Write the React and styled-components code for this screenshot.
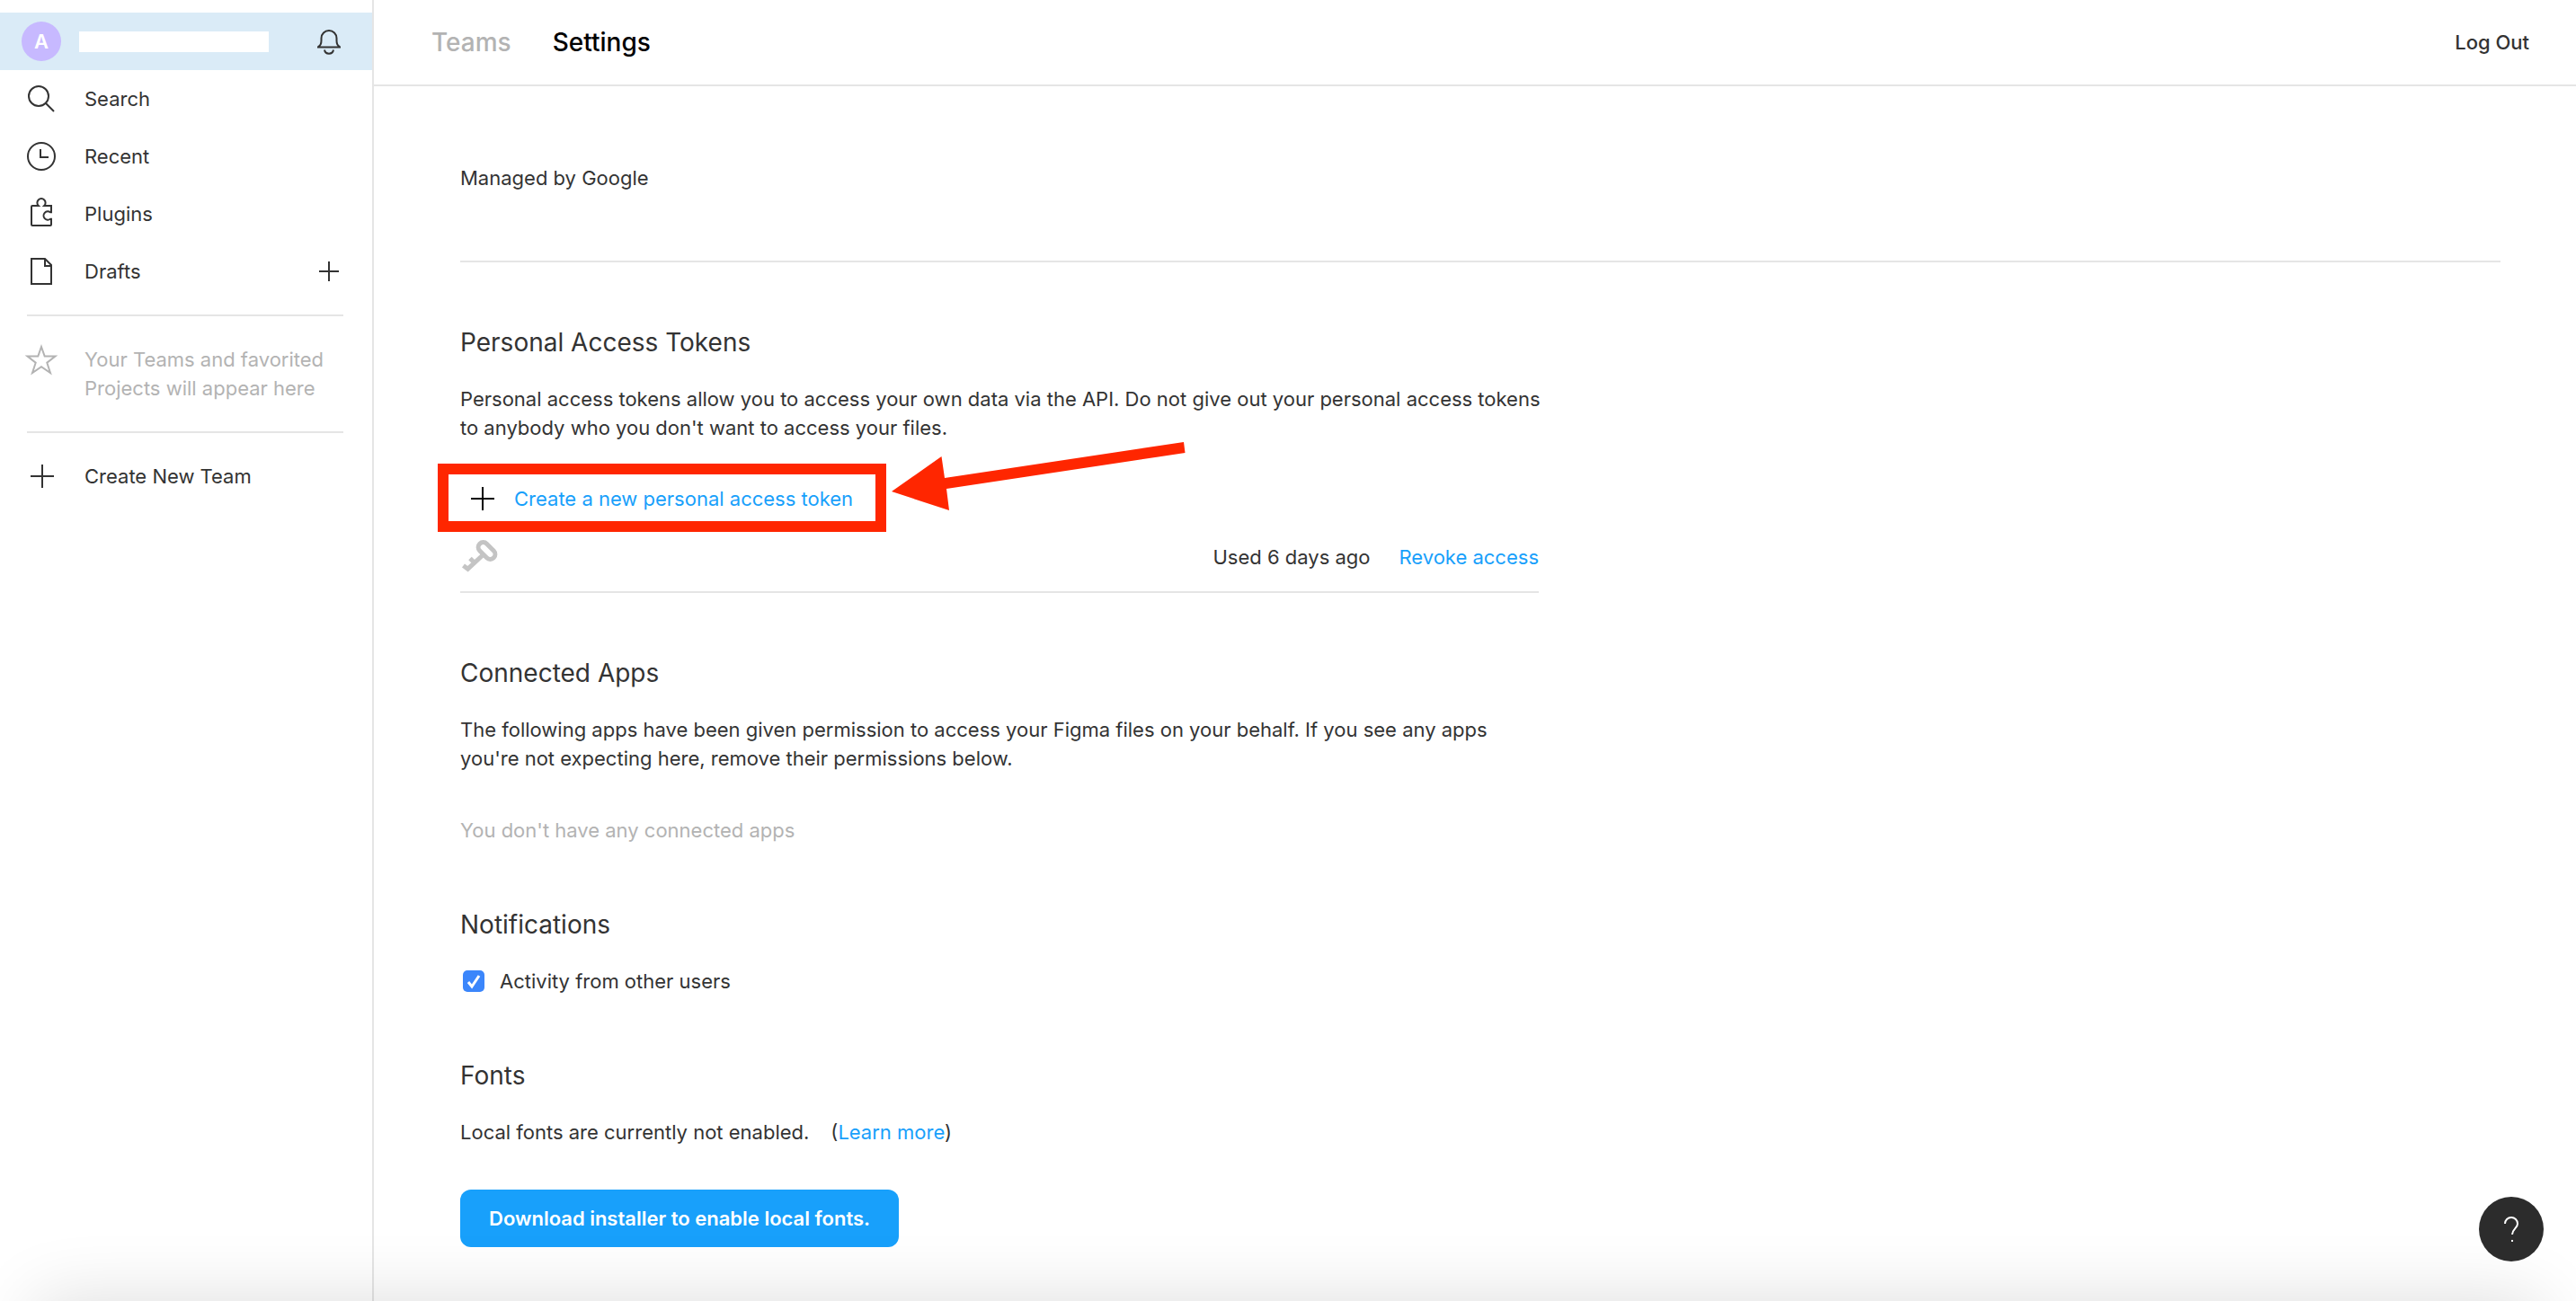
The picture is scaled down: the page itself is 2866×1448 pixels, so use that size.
import React from "react";
import styled, { createGlobalStyle } from "styled-components";

const Global = createGlobalStyle`
  *, *::before, *::after { box-sizing: border-box; }
  body {
    margin: 0;
    background: #fff;
    color: #333;
    font: 400 22px/32px Inter, "Liberation Sans", sans-serif;
  }
  h1, h2, p { margin: 0; font-weight: 400; }
  button { font: inherit; color: inherit; background: none; border: 0; padding: 0; cursor: pointer; }
  a { color: inherit; text-decoration: none; }
  svg { display: block; flex: none; overflow: visible; }
`;

const Shell = styled.div`
  display: flex;
  min-height: 100vh;
`;

const Sidebar = styled.nav`
  flex: none;
  width: 416px;
  padding-top: 14px;
  border-right: 2px solid #e5e5e5;
`;

const SideRow = styled.div`
  display: flex;
  align-items: center;
  height: 64px;
  padding: 0 32px 0 24px;
  background: ${(p) => (p.$selected ? "#daebf7" : "none")};
`;

const SideLink = styled.a`
  display: flex;
  align-items: center;
  flex: 1;
  gap: ${(p) => (p.$profile ? 20 : 26)}px;
`;

const Avatar = styled.span`
  width: 44px;
  height: 44px;
  border-radius: 50%;
  background: #c7b9ff;
  color: #fff;
  font-weight: 600;
  line-height: 44px;
  text-align: center;
`;

const NameField = styled.span`
  width: 211px;
  height: 23px;
  background: #fff;
`;

const SideDivider = styled.hr`
  height: 2px;
  margin: 16px 32px 16px 30px;
  border: 0;
  background: #e5e5e5;
`;

const EmptyHint = styled.div`
  display: flex;
  gap: 26px;
  padding: 16px 24px;
  color: #b3b3b3;
`;

const Page = styled.div`
  flex: 1;
  min-width: 0;
`;

const Header = styled.header`
  display: flex;
  align-items: center;
  justify-content: space-between;
  height: 96px;
  padding: 0 52px 0 64px;
  border-bottom: 2px solid #e5e5e5;
`;

const Tabs = styled.div`
  display: flex;
  gap: 46px;
`;

const Tab = styled.a`
  color: ${(p) => (p.$active ? "#000" : "#b3b3b3")};
  font-size: 28px;
  font-weight: 500;
`;

const LogOut = styled.button`
  && { font-weight: 500; }
`;

const Content = styled.main`
  padding: 86px 84px 60px 96px;
`;

const Managed = styled.p`
  padding-bottom: 76px;
  border-bottom: 2px solid #e5e5e5;
`;

const Section = styled.section`
  max-width: 1200px;
  padding-top: 73px;
`;

const Heading = styled.h2`
  margin-bottom: 31px;
  font-size: 28px;
`;

const Description = styled.p`
  margin-right: -8px;
`;

const Callout = styled.div`
  position: relative;
  width: fit-content;
  margin: 24px 0 0 -25px;
  padding: 11px 25px 9px;
  border: 12px solid #ff2600;
`;

const CreateToken = styled.button`
  display: flex;
  align-items: center;
  gap: 22px;
  && { color: #18a0fb; }
`;

const Arrow = styled.svg`
  position: absolute;
  left: 100%;
  top: -36px;
  margin-left: 18px;
`;

const TokenRow = styled.div`
  display: flex;
  align-items: center;
  gap: 32px;
  height: 68px;
  padding-bottom: 10px;
  border-bottom: 2px solid #e5e5e5;
`;

const TokenUse = styled.span`
  margin-left: auto;
`;

const BlueLink = styled.a`
  color: #18a0fb;
`;

const Muted = styled.p`
  margin-top: 48px;
  color: #b3b3b3;
`;

const CheckLabel = styled.label`
  display: flex;
  align-items: center;
  gap: 17px;
  padding-left: 3px;
`;

const CheckWrap = styled.span`
  display: grid;
  > * { grid-area: 1 / 1; }
`;

const Check = styled.input`
  appearance: none;
  width: 24px;
  height: 24px;
  margin: 0;
  border-radius: 5px;
  background: #3b86fb;
`;

const FontsLine = styled.p`
  display: flex;
  gap: 24px;
`;

const Download = styled.button`
  && {
    margin-top: 48px;
    padding: 16px 32px;
    border-radius: 12px;
    background: #18a0fb;
    color: #fff;
    font-weight: 600;
  }
`;

const Help = styled.button`
  && {
    position: fixed;
    right: 36px;
    bottom: 44px;
    display: grid;
    place-items: center;
    width: 72px;
    height: 72px;
    border-radius: 50%;
    background: #2c2c2c;
  }
`;

const BottomShade = styled.div`
  position: fixed;
  left: 40px;
  right: 40px;
  top: 100%;
  height: 100px;
  box-shadow: 0 0 80px rgba(0, 0, 0, 0.14);
  pointer-events: none;
`;

const Icon = ({ children, w = 44, h = 44, color = "#333" }) => (
  <svg width={w} height={h} viewBox={`0 0 ${w} ${h}`} fill="none" stroke={color} strokeWidth="2" aria-hidden="true">
    {children}
  </svg>
);

const SearchIcon = () => (
  <Icon><circle cx="19" cy="19" r="11" /><path d="M27 27l9 9" /></Icon>
);
const ClockIcon = () => (
  <Icon><circle cx="22" cy="22" r="15" /><path d="M21 14v9h9" /></Icon>
);
const PluginIcon = () => (
  <Icon>
    <path d="M12 13H18.800a4.600 4.600 0 1 1 6.400 0H33V20.200h-1a4.700 4.700 0 1 0 0 7.600h1V34a1 1 0 0 1-1 1h-20a1 1 0 0 1-1-1v-20a1 1 0 0 1 1-1z" />
  </Icon>
);
const FileIcon = () => (
  <Icon><path d="M11 8h15l7 7v21H11zM26 8v8h7" /></Icon>
);
const StarIcon = () => (
  <Icon color="#b3b3b3" h={32}>
    <path d="M22 2L25.700 12.500H37.500L28.300 19.700L32 31L22 24.200L12 31L15.700 19.700L6.500 12.500H18.300z" />
  </Icon>
);
const TeamPlus = () => (
  <Icon><path d="M23 9v26M10 22h26" /></Icon>
);
const DraftPlus = () => (
  <Icon w={32} h={32}><path d="M16 5v22M5 16h22" /></Icon>
);
const BellIcon = () => (
  <Icon w={32} h={32}>
    <path d="M3 22.500h26M4 22c2.500-1 3.500-3 3.500-7v-2.500a8.500 8.500 0 0 1 17 0v2.500c0 4 1 6 3.500 7M11 25.500c1 5.500 9 5.500 10 0" />
  </Icon>
);
const KeyIcon = () => (
  <Icon color="#c4c4c4">
    <g strokeWidth="5">
      <rect x="18.500" y="9.500" width="22" height="11" rx="5.500" transform="rotate(45 29.500 15)" />
      <path d="M25.500 19.500L8.500 35.200L3.500 31.500M16 28.500L11 23.500" />
    </g>
  </Icon>
);

export default function App() {
  return (
    <>
      <Global />
      <Shell>
        <Sidebar>
          <SideRow $selected>
            <SideLink $profile href="#profile" aria-label="Profile">
              <Avatar>A</Avatar>
              <NameField />
            </SideLink>
            <button aria-label="Notifications"><BellIcon /></button>
          </SideRow>
          <SideRow><SideLink href="#search"><SearchIcon />Search</SideLink></SideRow>
          <SideRow><SideLink href="#recent"><ClockIcon />Recent</SideLink></SideRow>
          <SideRow><SideLink href="#plugins"><PluginIcon />Plugins</SideLink></SideRow>
          <SideRow>
            <SideLink href="#drafts"><FileIcon />Drafts</SideLink>
            <button aria-label="New draft"><DraftPlus /></button>
          </SideRow>
          <SideDivider />
          <EmptyHint>
            <StarIcon />
            <span>Your Teams and favorited Projects will appear here</span>
          </EmptyHint>
          <SideDivider />
          <SideRow><SideLink href="#team"><TeamPlus />Create New Team</SideLink></SideRow>
        </Sidebar>
        <Page>
          <Header>
            <Tabs>
              <Tab href="#teams">Teams</Tab>
              <Tab href="#settings" $active>Settings</Tab>
            </Tabs>
            <LogOut>Log Out</LogOut>
          </Header>
          <Content>
            <Managed>Managed by Google</Managed>
            <Section>
              <Heading>Personal Access Tokens</Heading>
              <Description>
                Personal access tokens allow you to access your own data via the API. Do not give out your
                personal access tokens to anybody who you don't want to access your files.
              </Description>
              <Callout>
                <CreateToken>
                  <Icon w={26} h={26} color="#000"><path d="M13 0v26M0 13h26" /></Icon>
                  Create a new personal access token
                </CreateToken>
                <Arrow width="328" height="90" viewBox="0 0 328 90" aria-hidden="true">
                  <path fill="#ff2600" d="M0 55L55.500 16L59 40L325 0L326.500 12L61 52L64 76z" />
                </Arrow>
              </Callout>
              <TokenRow>
                <KeyIcon />
                <TokenUse>Used 6 days ago</TokenUse>
                <BlueLink href="#revoke">Revoke access</BlueLink>
              </TokenRow>
            </Section>
            <Section>
              <Heading>Connected Apps</Heading>
              <Description>
                The following apps have been given permission to access your Figma files on your behalf. If you
                see any apps you're not expecting here, remove their permissions below.
              </Description>
              <Muted>You don't have any connected apps</Muted>
            </Section>
            <Section>
              <Heading>Notifications</Heading>
              <CheckLabel>
                <CheckWrap>
                  <Check type="checkbox" defaultChecked />
                  <Icon w={24} h={24} color="#fff"><path strokeWidth="3" d="M6 13l4 5 8-12" /></Icon>
                </CheckWrap>
                Activity from other users
              </CheckLabel>
            </Section>
            <Section>
              <Heading>Fonts</Heading>
              <FontsLine>
                <span>Local fonts are currently not enabled.</span>
                <span>(<BlueLink href="#learn">Learn more</BlueLink>)</span>
              </FontsLine>
              <Download>Download installer to enable local fonts.</Download>
            </Section>
          </Content>
        </Page>
      </Shell>
      <BottomShade />
      <Help aria-label="Help">
        <Icon w={32} h={32} color="#fff">
          <path d="M9 10a7 7 0 0 1 14 0c0 5-6 6-6 12M16 29h2" />
        </Icon>
      </Help>
    </>
  );
}
